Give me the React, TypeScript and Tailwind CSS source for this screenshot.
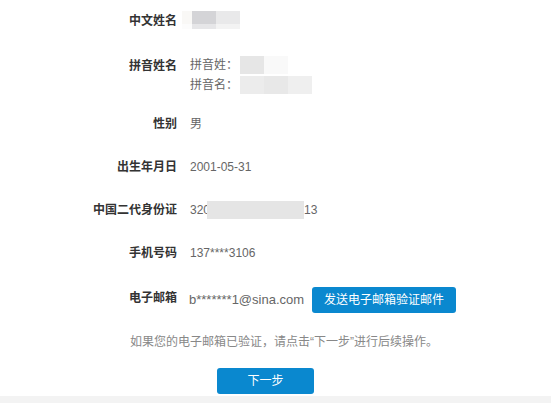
import React from "react";

const font = { fontFamily: '"Liberation Sans", "Noto Sans CJK SC", sans-serif' };

function Label({ children }: { children: React.ReactNode }) {
  return (
    <div className="w-[177px] shrink-0 text-right text-[12px] font-bold text-[#333] leading-[22px]">
      {children}
    </div>
  );
}

function Row({ label, children, className = "" }: { label: string; children: React.ReactNode; className?: string }) {
  return (
    <div className={"flex items-start " + className}>
      <Label>{label}</Label>
      <div className="ml-[13px] text-[12px] text-[#666] leading-[22px]">{children}</div>
    </div>
  );
}

export default function App() {
  return (
    <div className="w-[551px] h-[403px] bg-white flex flex-col overflow-hidden" style={font}>
      <Row label="中文姓名" className="mt-[10px]">
        <div className="flex h-[22px] items-start pt-[1px] -ml-[8px]">
          <div className="flex flex-col">
            <div className="flex">
              <div className="w-[10px] h-[13px] bg-[#f9f8f6]" />
              <div className="w-[24px] h-[13px] bg-[#d4d4d7]" />
              <div className="w-[24px] h-[13px] bg-[#e9e9ea]" />
            </div>
            <div className="flex">
              <div className="w-[10px] h-[5px] bg-[#fcfcfc]" />
              <div className="w-[24px] h-[5px] bg-[#e6e6e8]" />
              <div className="w-[24px] h-[5px] bg-[#f3f3f3]" />
            </div>
          </div>
        </div>
      </Row>

      <div className="flex items-start mt-[23px]">
        <Label>拼音姓名</Label>
        <div className="ml-[13px] text-[12px] text-[#666] flex flex-col">
          <div className="flex items-center h-[20px]">
            <span className="w-[50px]">拼音姓：</span>
            <div className="w-[24px] h-[18px] bg-[#e6e6e6]" />
            <div className="w-[24px] h-[18px] bg-[#f9f9f9]" />
          </div>
          <div className="flex items-center h-[20px]">
            <span className="w-[50px]">拼音名：</span>
            <div className="w-[24px] h-[18px] bg-[#ececec]" />
            <div className="w-[24px] h-[18px] bg-[#e8e8e8]" />
            <div className="w-[24px] h-[18px] bg-[#efefef]" />
          </div>
        </div>
      </div>

      <Row label="性别" className="mt-[18px]">男</Row>
      <Row label="出生年月日" className="mt-[21px]">2001-05-31</Row>
      <Row label="中国二代身份证" className="mt-[21px]">
        <div className="flex items-center h-[22px]">
          <span className="whitespace-nowrap">320</span>
          <div className="-ml-[3px] w-[97px] h-[18px] bg-[#e5e5e5]" />
          <span>13</span>
        </div>
      </Row>
      <Row label="手机号码" className="mt-[21px]">137****3106</Row>

      <div className="flex items-center mt-[23px] h-[26px]">
        <div className="w-[177px] shrink-0 text-right text-[12px] font-bold text-[#333] leading-[22px] -mt-[4px]">电子邮箱</div>
        <span className="ml-[12px] text-[13px] text-[#666] leading-[22px] -mt-[1px]">b*******1@sina.com</span>
        <button className="ml-[8px] w-[144px] h-[26px] rounded-[3px] bg-[#0a88cf] text-white text-[12px] leading-[26px] text-center">
          发送电子邮箱验证邮件
        </button>
      </div>

      <div className="mt-[18px] ml-[130px] text-[12px] text-[#888] leading-[22px] whitespace-nowrap">
        如果您的电子邮箱已验证，请点击“下一步”进行后续操作。
      </div>

      <button className="mt-[15px] ml-[217px] w-[97px] h-[26px] rounded-[3px] bg-[#0a88cf] text-white text-[12px] leading-[26px] text-center">
        下一步
      </button>

      <div className="mt-[2px] flex-1 bg-[#f3f3f3]" />
    </div>
  );
}
